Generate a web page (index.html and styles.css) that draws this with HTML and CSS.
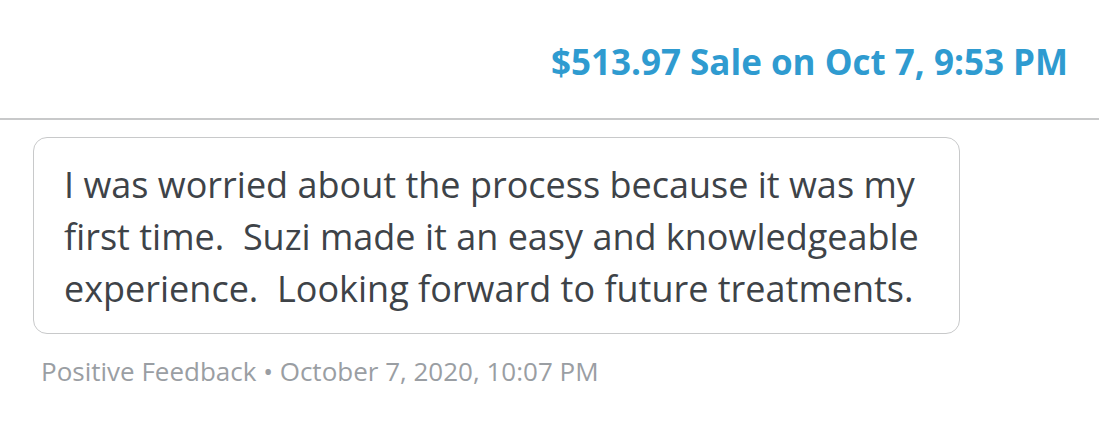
FILE: index.html
```html
<!DOCTYPE html>
<html lang="en">
<head>
  <meta charset="UTF-8">
  <meta name="viewport" content="width=device-width, initial-scale=1.0">
  <title>Feedback</title>
  <link rel="stylesheet" href="styles.css">
</head>
<body>

  <div class="header">
    <a class="sale" href="#">$513.97 Sale on Oct 7, 9:53 PM</a>
  </div>

  <div class="thread">
    <!-- 客户留言 -->
    <div class="bubble">
      I was worried about the process because it was my first time.&nbsp; Suzi made it an easy and knowledgeable experience.&nbsp; Looking forward to future treatments.
    </div>

    <div class="meta">Positive Feedback &bull; October 7, 2020, 10:07 PM</div>
  </div>

</body>
</html>
```

FILE: styles.css
```css
body{
  margin: 0;
  background: #fff;
  font-family: "Open Sans", sans-serif;
}

.header{
  display: flex;
  justify-content: flex-end;
  height: 120px;
  padding-right: 31px;
  border-bottom: 2px solid #c8c9ca;
  box-sizing: border-box;
}

.sale{
  margin-top: 42px;
  font-size: 35px;
  font-weight: 700;
  color: #2f9bd0;
  text-decoration: none;
  line-height: 40px;
}

.thread{
  padding: 17px 0 0 33px;
}

.bubble{
  width: 927px;
  box-sizing: border-box;
  padding: 21px 20px 18px 30px;
  border: 1.5px solid #c8c9ca;
  border-radius: 14px;
  font-size: 36px;
  line-height: 52px;
  color: #3e4348;
}

.meta{
  margin-top: 19px;
  padding-left: 8px;
  font-size: 26px;
  line-height: 36px;
  color: #9a9ea3;
}
```
